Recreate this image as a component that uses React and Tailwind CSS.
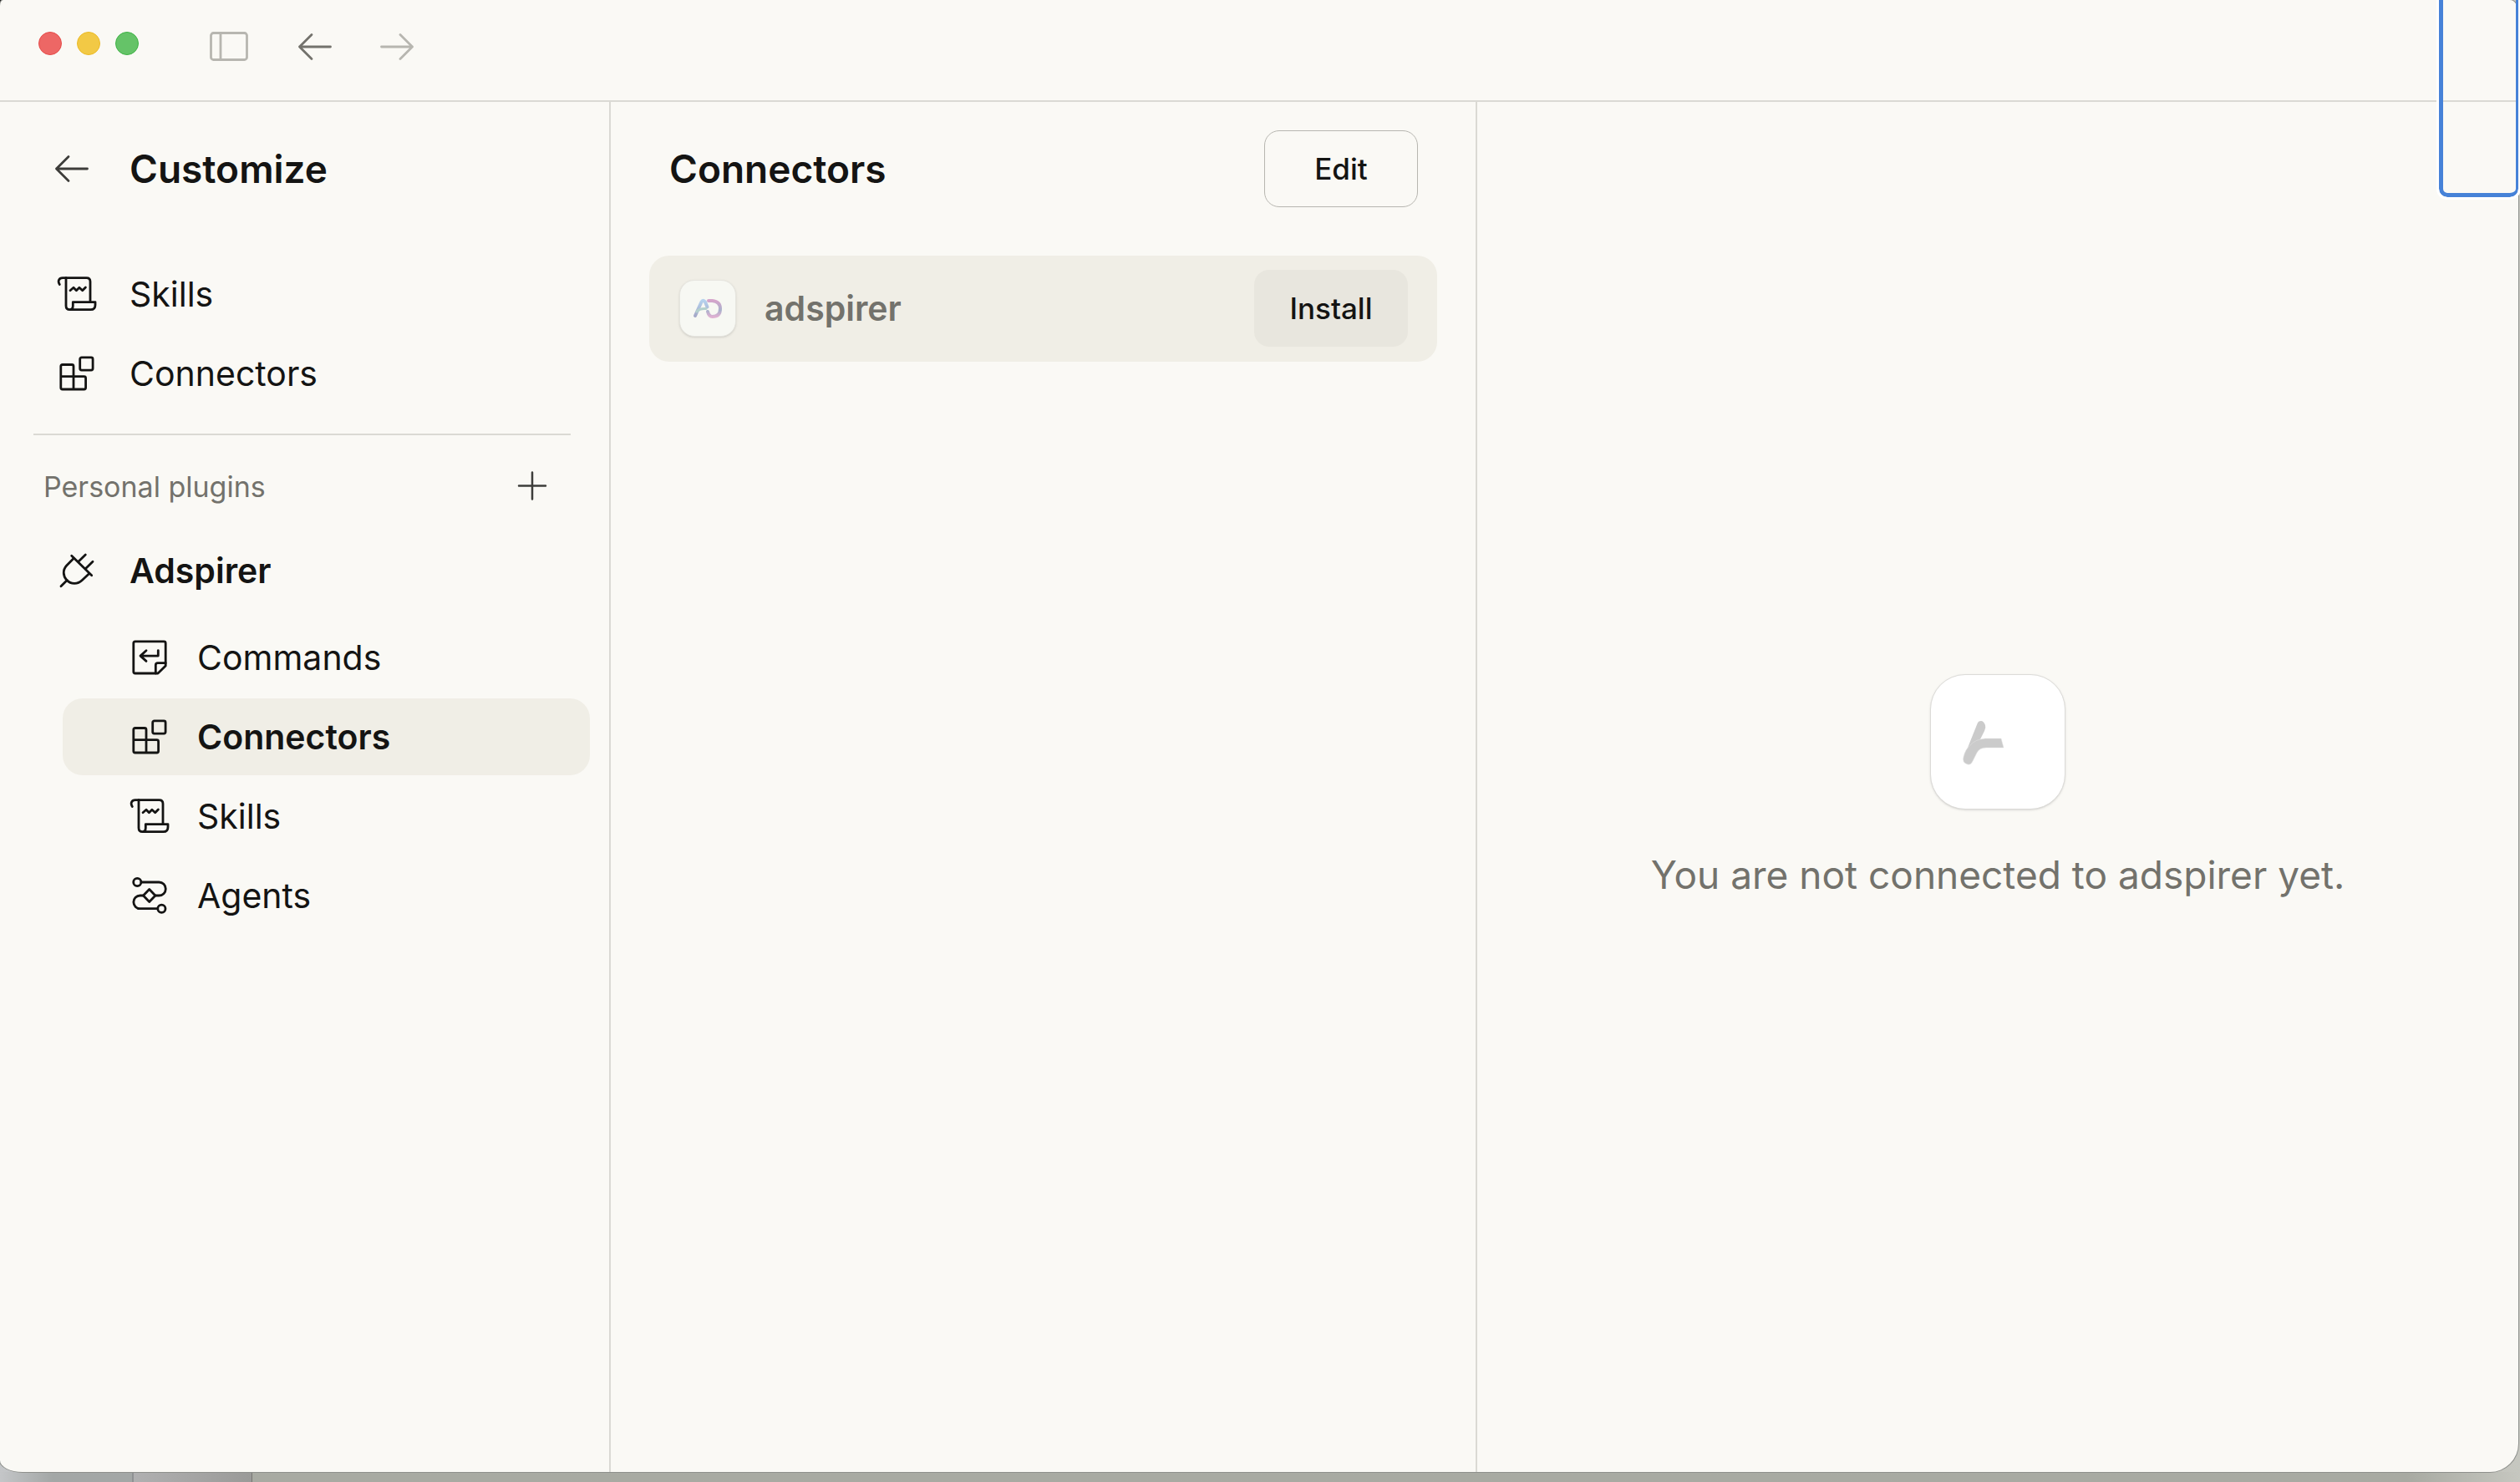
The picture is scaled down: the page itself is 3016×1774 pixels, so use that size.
const navItems = [
  { label: "Skills", icon: ScrollIcon },
  { label: "Connectors", icon: BlocksIcon },
];

const pluginItems = [
  { label: "Commands", icon: CommandIcon },
  { label: "Connectors", icon: BlocksIcon, active: true },
  { label: "Skills", icon: ScrollIcon },
  { label: "Agents", icon: AgentsIcon },
];

export default function App() {
  return (
    <div className="flex min-h-screen flex-col overflow-hidden bg-[radial-gradient(circle_at_0_0,#111_0_14px,transparent_15px),linear-gradient(to_right,#c4c6c8,#b4b7b6_4%,#b4b5b0_90%,#c6c7c0)] pr-[2px] font-[Inter,'Liberation_Sans',sans-serif] text-[41px] leading-[48px] text-[#141413]">
      <div className="relative flex flex-1 flex-col rounded-tl-[4px_7px] rounded-tr-[10px_15px] rounded-br-[34px] rounded-bl-[27px_14px] bg-[#faf9f5] shadow-[0_0_0_1px_#8e908c]">
        <TitleBar />
        <div className="flex flex-1">
          <Sidebar />
          <ConnectorList />
          <ConnectorDetail />
        </div>
        <div className="pointer-events-none absolute -top-4 right-0 h-[252px] w-[95px] rounded-[10px] border-[5px] border-r-[3px] border-[#4682d8] outline-[3px] outline-white" />
      </div>
      <DesktopEdge />
    </div>
  );
}

function TitleBar() {
  return (
    <header className="flex h-[122px] items-start border-b-2 border-[#dad9d4] pt-8 pl-[46px]">
      <div className="mt-[6px] flex gap-[18px]">
        <button type="button" aria-label="Close" className="size-7 rounded-full border border-[#e64c4a] bg-[#ed6765]" />
        <button type="button" aria-label="Minimize" className="size-7 rounded-full border border-[#ecbb26] bg-[#f2c945]" />
        <button type="button" aria-label="Zoom" className="size-7 rounded-full border border-[#3fb346] bg-[#65c368]" />
      </div>
      <button type="button" aria-label="Toggle sidebar" className="ml-[84px] text-[#b7b6b0]">
        <Icon>
          <rect x="2.5" y="7.5" width="43" height="32" rx="3" />
          <path d="M14 7.5v32" />
        </Icon>
      </button>
      <div className="ml-[55px] flex gap-[50px]">
        <button type="button" aria-label="Back" className="text-[#73726c]">
          <ArrowIcon />
        </button>
        <button type="button" aria-label="Forward" disabled className="rotate-180 text-[#b7b6b0]">
          <ArrowIcon />
        </button>
      </div>
    </header>
  );
}

function Sidebar() {
  return (
    <aside className="w-[731px] shrink-0 border-r-2 border-[#dad9d4] pt-[34px] pr-[23px] pl-6">
      <div className="flex h-[92px] items-center gap-[45px] pl-[38px]">
        <button type="button" aria-label="Leave customize" className="text-[#3d3d3a]">
          <ArrowIcon />
        </button>
        <h1 className="text-[46px] font-semibold">Customize</h1>
      </div>

      <nav className="mt-[58px] flex flex-col gap-[3px]">
        {navItems.map(({ label, icon: ItemIcon }) => (
          <a key={label} href="#" className="flex h-[92px] items-center gap-[39px] rounded-3xl pl-11">
            <ItemIcon />
            {label}
          </a>
        ))}
      </nav>

      <hr className="mt-[26px] mr-[23px] ml-4 border-t-2 border-[#dad9d4]" />

      <div className="mt-8 flex h-[60px] items-center justify-between pr-[45px] pl-7">
        <h2 className="text-[34px] text-[#73726c]">Personal plugins</h2>
        <button type="button" aria-label="Add plugin" className="text-[#3d3d3a]">
          <Icon>
            <path d="M24 6.500v32M8 22.500h32" strokeWidth="2.500" />
          </Icon>
        </button>
      </div>

      <a href="#" className="mt-6 flex h-[92px] items-center gap-[39px] pl-11 font-semibold">
        <PlugIcon />
        Adspirer
      </a>
      <nav className="mt-3 ml-[51px] flex flex-col gap-[3px]">
        {pluginItems.map(({ label, icon: ItemIcon, active }) => (
          <a
            key={label}
            href="#"
            className={
              active
                ? "flex h-[92px] items-center gap-[33px] rounded-3xl bg-[#f0eee6] pl-20 font-semibold"
                : "flex h-[92px] items-center gap-[33px] rounded-3xl pl-20"
            }
          >
            <ItemIcon />
            {label}
          </a>
        ))}
      </nav>
    </aside>
  );
}

function ConnectorList() {
  return (
    <section className="w-[1037px] shrink-0 border-r-2 border-[#dad9d4] px-[46px] pt-[34px]">
      <div className="flex h-[92px] items-center justify-between pr-[23px] pl-6">
        <h2 className="text-[46px] font-semibold">Connectors</h2>
        <button type="button" className="h-[92px] w-[184px] rounded-[18px] border border-[#b7b6b0] text-[35px] font-medium">
          Edit
        </button>
      </div>

      <div className="mt-[58px] flex h-[127px] items-start rounded-3xl bg-[#f0eee6] pt-[17px] pr-[35px] pl-9">
        <div className="flex h-[92px] flex-1 items-center gap-[34px]">
          <div className="flex size-[68px] items-center justify-center rounded-[18px] border border-[#e6e5df] bg-[#f7f8f3] shadow-sm">
            <AdLogo />
          </div>
          <span className="font-semibold text-[#73726c]">adspirer</span>
        </div>
        <button type="button" className="h-[92px] w-[184px] rounded-[18px] bg-[#e8e6de] text-[35px] font-medium">
          Install
        </button>
      </div>
    </section>
  );
}

function ConnectorDetail() {
  return (
    <main className="flex flex-1 flex-col items-center justify-center gap-12">
      <div className="size-[162px] rounded-[42px] border border-[#dcdbd8] bg-white shadow-sm">
        <svg viewBox="0 0 160 160" className="size-40 text-[#cbcbcb]" aria-hidden="true">
          <path d="M44 87 56 57q1-2 4-2 3 0 5 5 1 3-1 7L58 79Z" fill="currentColor" />
          <path
            d="M39 98q2-9 8-14 6-7 18-8h19l3 11H66q-8 0-11 6l-5 10q-2 5-6 4-7-2-5-9Z"
            fill="currentColor"
            stroke="#e2e2e2"
            strokeWidth="0.500"
          />
        </svg>
      </div>
      <p className="text-[46px] leading-[60px] text-[#73726c]">You are not connected to adspirer yet.</p>
    </main>
  );
}

// strip of the desktop that shows below the window
function DesktopEdge() {
  return (
    <div className="-mr-[2px] flex h-3 shrink-0">
      <div className="w-[160px] border-r-2 border-[#8f9193] bg-linear-to-r from-[#c4c6c8] to-[#a3a7a6] to-40%" />
      <div className="w-[142px] border-r border-[#777773] bg-linear-to-r from-[#b0b0b1] to-[#9a9a98]" />
      <div className="flex-1 bg-linear-to-r from-[#a8aaa2] from-95% to-[#c6c7c0]" />
    </div>
  );
}

function Icon({ children }) {
  return (
    <svg
      viewBox="0 0 48 48"
      className="size-12 shrink-0"
      fill="none"
      stroke="currentColor"
      strokeWidth="2.8"
      strokeLinecap="round"
      strokeLinejoin="round"
      aria-hidden="true"
    >
      {children}
    </svg>
  );
}

function ArrowIcon() {
  return (
    <Icon>
      <path d="M42.500 24h-37M20 9.500 5.500 24 20 38.500" />
    </Icon>
  );
}

function ScrollIcon() {
  return (
    <Icon>
      <path d="M3.3 12.5C.8 8.5 2.5 4.7 7 4.7h28.5Q40 4.7 40 9v24.5" />
      <path d="M11 4.7V38q0 4.7 4.5 4.7h25Q46 42.7 46 37v-3.4H19.3V38q0 4.7-4 4.7" />
      <path d="m16 19.7 4-3.4 3.4 3.4 3.5-3.4 3.8 3.4 3.7-3.7" />
    </Icon>
  );
}

function BlocksIcon() {
  return (
    <Icon>
      <rect x="27.7" y="4.9" width="15.4" height="15.2" rx="2" />
      <path d="M20 27.7V15.5q0-2-2-2H6.8q-2 0-2 2V41q0 2 2 2h25.8q2 0 2-2V29.7q0-2-2-2H4.8M20 27.7V43" />
    </Icon>
  );
}

function CommandIcon() {
  return (
    <Icon>
      <path d="M34 43H6.8q-2 0-2-2V6.9q0-2 2-2h34.4q2 0 2 2V34L34 43Z" />
      <path d="M31.3 43v-9.8q0-2.5 2.5-2.5h9.4" />
      <path d="M34.3 15.6v6.500H13M20 15.800l-7 6.300 7 6.300" />
    </Icon>
  );
}

function AgentsIcon() {
  return (
    <Icon>
      <circle cx="9.3" cy="8" r="4.6" />
      <circle cx="38.4" cy="39.7" r="4.6" />
      <path d="M14 8h21.3a8 8 0 0 1 0 16h-4.6M16.5 24h-3.8a7.85 7.85 0 0 0 0 15.7h21" />
      <path d="m23.7 16.5 7.2 7.5-7.2 7.5-7.2-7.5Z" />
    </Icon>
  );
}

function PlugIcon() {
  return (
    <Icon>
      <path d="m17.7 6.3 24 23.4M34.3 5l-8.2 8M43 13.3l-8.4 8.2M12.3 35.5 5 42.7" />
      <path d="m20.3 9.3-8.600 8.700c-5 5.500-4.200 12.500 0 17.200 5.200 5.500 13.500 5.300 18.600.3l8-7.500" />
    </Icon>
  );
}

function AdLogo() {
  return (
    <svg viewBox="0 0 66 66" className="size-[66px]" fill="none" strokeWidth="4" strokeLinecap="round" aria-hidden="true">
      <defs>
        <linearGradient id="logo-left" x1="0" y1="0" x2="0" y2="1">
          <stop offset="0" stopColor="#b5d2ee" />
          <stop offset="1" stopColor="#a5a9c8" />
        </linearGradient>
        <linearGradient id="logo-right" x1="0" y1="0" x2="0" y2="1">
          <stop offset="0" stopColor="#d5a5cb" />
          <stop offset="0.6" stopColor="#a9b1cc" />
          <stop offset="1" stopColor="#dfb1d2" />
        </linearGradient>
      </defs>
      <path d="m18 42 7.500-16.500q2-3.500 4.500 0l2.500 6" stroke="url(#logo-left)" />
      <path d="M20 37q3-4 11-3.500" stroke="#b4d0cc" strokeWidth="3" />
      <path d="M34 24h4.500q9.500 1 9.500 9.500Q48 43 38.500 43q-4 0-5.500-6" stroke="url(#logo-right)" />
    </svg>
  );
}
